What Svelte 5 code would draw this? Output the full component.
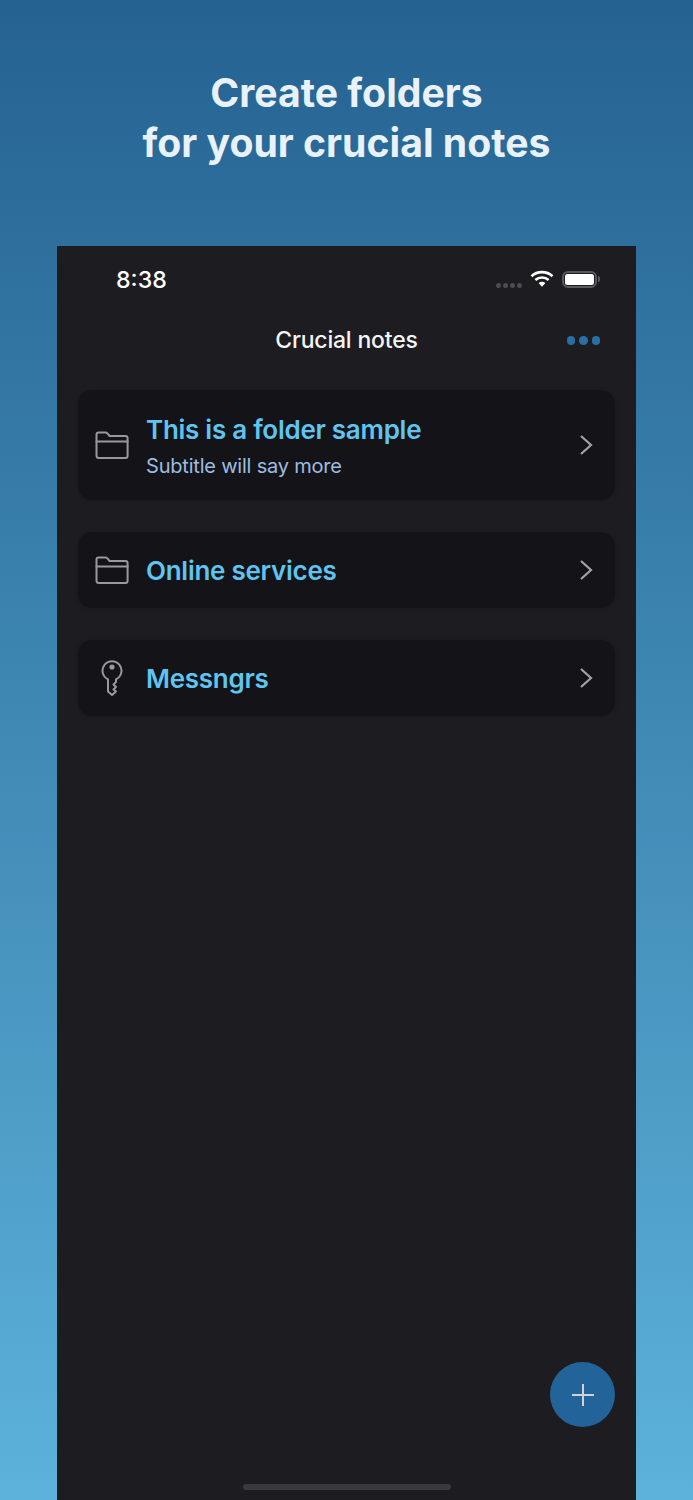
<script>
  const rows = [
    { icon: 'folder', title: 'This is a folder sample', sub: 'Subtitle will say more' },
    { icon: 'folder', title: 'Online services' },
    { icon: 'key', title: 'Messngrs' }
  ];
</script>

<div class="page">
  <h1>Create folders<br />for your crucial notes</h1>
  <div class="phone">
    <div class="status">
      <span class="time">8:38</span>
      <div class="status-icons">
        <div class="signal"><i></i><i></i><i></i><i></i></div>
        <svg class="wifi" width="24" height="18" viewBox="0 0 24 18">
          <path d="M1.5 6.2C7.3 .8 16.7 .8 22.5 6.2" fill="none" stroke="#fff" stroke-width="2.6" />
          <path d="M5.4 10C9 6.7 15 6.7 18.6 10" fill="none" stroke="#fff" stroke-width="2.6" />
          <path d="M8.6 13.1 12 16.8 15.4 13.1C13.4 11.4 10.6 11.4 8.6 13.1Z" fill="#fff" />
        </svg>
        <div class="battery"><div class="fill"></div></div>
        <div class="cap"></div>
      </div>
    </div>
    <div class="nav">
      <span class="nav-title">Crucial notes</span>
      <div class="dots"><i></i><i></i><i></i></div>
    </div>
    <div class="list">
      {#each rows as row}
        <div class="card" class:tall={row.sub}>
          {#if row.icon === 'folder'}
            <svg class="icon" width="34" height="28" viewBox="0 0 34 28" fill="none" stroke="#99999b" stroke-width="2" stroke-linejoin="round" stroke-linecap="round">
              <path d="M1.500 24.500V3.600C1.500 2.400 2.400 1.500 3.600 1.500H10.500C11.300 1.500 11.800 1.800 12.400 2.400L14.600 5H30.400C31.700 5 32.600 5.900 32.600 7.200V24.800C32.600 26.100 31.700 27 30.400 27H3.800C2.500 27 1.500 26 1.500 24.500Z" />
              <path d="M1.500 10.500H32.600" />
            </svg>
          {:else}
            <svg class="icon" width="34" height="36" viewBox="0 0 34 36" fill="none" stroke="#99999b" stroke-width="2" stroke-linejoin="round" stroke-linecap="round">
              <path d="M13 19.300A9.500 9.500 0 1 1 21 19.300V22L18.500 24.500 21 27 18.500 29.500 21 31.500 17 35 13 31.500Z" />
              <circle cx="17" cy="7" r="2.600" fill="#99999b" stroke="none" />
            </svg>
          {/if}
          <div class="text">
            <div class="title">{row.title}</div>
            {#if row.sub}<div class="sub">{row.sub}</div>{/if}
          </div>
          <svg class="chev" width="14" height="22" viewBox="0 0 14 22" fill="none" stroke="#a3a3a5" stroke-width="2.200">
            <path d="M2 2 12 11 2 20" />
          </svg>
        </div>
      {/each}
    </div>
    <button class="fab" aria-label="Add">
      <svg width="22" height="22" viewBox="0 0 22 22" stroke="#ccd3d9" stroke-width="2"><path d="M11 0V22M0 11H22" /></svg>
    </button>
    <div class="home"></div>
  </div>
</div>

<style>
  :global(body) { margin: 0; background: #2a6a99; }
  .page {
    width: 693px;
    height: 1500px;
    overflow: hidden;
    display: flex;
    flex-direction: column;
    align-items: center;
    background: linear-gradient(180deg, #256291 0%, #5cb2da 100%);
    font-family: Inter, "Liberation Sans", sans-serif;
  }
  h1 {
    margin: 68px 0 0;
    height: 178px;
    font-size: 39.200px;
    line-height: 50px;
    font-weight: 700;
    text-align: center;
    color: #e9f2f8;
  }
  .phone {
    position: relative;
    width: 579px;
    flex: 1;
    align-self: flex-start;
    margin-left: 57px;
    background: #1c1c21;
    display: flex;
    flex-direction: column;
  }
  .status {
    height: 66px;
    box-sizing: border-box;
    display: flex;
    justify-content: space-between;
    align-items: flex-start;
    padding: 19px 36px 0 59px;
  }
  .time { font-size: 23.200px; line-height: 30px; font-weight: 500; color: #fff; }
  .status-icons { display: flex; align-items: center; height: 28px; }
  .signal { display: flex; gap: 2px; margin: 12px 8px 0 0; }
  .signal i { width: 5px; height: 5px; border-radius: 50%; background: #4d4d50; }
  .wifi { margin-right: 8px; margin-top: -1px; }
  .battery {
    width: 35px; height: 17px;
    box-sizing: border-box;
    border: 2px solid #5a5a5c;
    border-radius: 6px;
    padding: 1px;
    display: flex;
  }
  .fill { flex: 1; background: #fff; border-radius: 2.500px; }
  .cap { width: 2px; height: 6px; background: #5a5a5c; border-radius: 0 2px 2px 0; margin-left: 1px; }
  .nav {
    position: relative;
    height: 56px;
    display: flex;
    align-items: center;
    justify-content: center;
  }
  .nav-title { font-size: 23px; font-weight: 500; letter-spacing: -0.2px; color: #f4f4f5; }
  .dots { position: absolute; right: 36px; top: 24px; display: flex; gap: 4px; }
  .dots i { width: 8.500px; height: 8.500px; border-radius: 50%; background: #2a6ea6; }
  .list { display: flex; flex-direction: column; gap: 31.500px; padding: 22px 21px 0; }
  .card {
    height: 76.500px;
    box-sizing: border-box;
    display: flex;
    align-items: center;
    padding: 0 22px 0 17px;
    border-radius: 14px;
    background: #141418;
    box-shadow: 0 1px 4px rgba(0,0,0,.12);
  }
  .card.tall { height: 110px; }
  .icon { flex: none; }
  .text { flex: 1; margin-left: 17px; padding-top: 2px; }
  .title { font-size: 26px; line-height: 32px; font-weight: 600; letter-spacing: -0.27px; color: #5fc5f0; }
  .sub { font-size: 20px; line-height: 24px; margin-top: 8px; letter-spacing: -0.2px; color: #9cbde0; }
  .chev { flex: none; }
  .fab {
    position: absolute;
    left: 493px;
    top: 1116px;
    width: 65px;
    height: 65px;
    padding: 0;
    border: 0;
    border-radius: 50%;
    background: #22639a;
    display: flex;
    align-items: center;
    justify-content: center;
  }
  .home {
    position: absolute;
    left: 186px;
    top: 1238px;
    width: 208px;
    height: 6px;
    border-radius: 3px;
    background: #3a3a3e;
  }
</style>
